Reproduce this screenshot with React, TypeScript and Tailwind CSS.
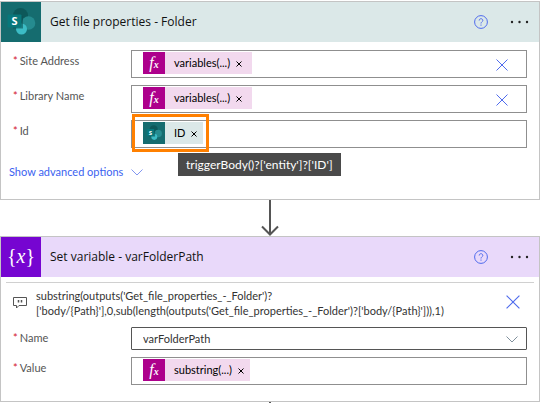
import type { ReactNode } from "react";

function SharePointIcon({ className }: { className: string }) {
  return (
    <svg viewBox="0 0 40 40" className={className} aria-hidden="true">
      <rect width="40" height="40" fill="#156c6f" />
      <circle cx="19.500" cy="13.500" r="7.500" fill="#0d585a" />
      <circle cx="27.500" cy="21" r="6.800" fill="#258b8f" />
      <circle cx="20.500" cy="27" r="5.500" fill="#3cbcc5" />
      <path d="M12 14h10v12.500H12z" fill="#0b5053" opacity="0.6" />
      <rect x="6.500" y="12.500" width="14" height="13" rx="1" fill="#08777b" />
      <text x="13.500" y="23" textAnchor="middle" fontSize="11" fontWeight="700" fill="#fff" fontFamily="Open Sans, sans-serif">
        S
      </text>
    </svg>
  );
}

function FxIcon() {
  return (
    <span className="flex size-[22px] shrink-0 items-center justify-center bg-[#ad008c] font-['Liberation_Serif',serif] text-base leading-none text-white italic">
      f<span className="pt-1 text-[10px] leading-none font-bold">x</span>
    </span>
  );
}

function CrossIcon({ className }: { className: string }) {
  return (
    <svg viewBox="0 0 12 12" className={className} fill="none" stroke="currentColor" aria-hidden="true">
      <path d="M.5.5l11 11M11.500.5l-11 11" />
    </svg>
  );
}

function ChevronIcon({ className }: { className: string }) {
  return (
    <svg viewBox="0 0 12 7" className={className} fill="none" stroke="currentColor" aria-hidden="true">
      <path d="M.5.5L6 6 11.500.5" />
    </svg>
  );
}

function CardHeader({ icon, title, tone }: { icon: ReactNode; title: string; tone: string }) {
  return (
    <header className={`flex h-10 items-center ${tone}`}>
      {icon}
      <h2 className="flex-1 pl-[9px] font-['Open_Sans','Noto_Sans',sans-serif] text-xs leading-5 text-[#111]">{title}</h2>
      <button type="button" aria-label="Help" className="text-[#4f6bed]">
        <svg viewBox="0 0 14 14" className="size-3.5" fill="none" stroke="currentColor" aria-hidden="true">
          <circle cx="7" cy="7" r="6.400" />
          <path d="M5.200 5.500c0-2.400 3.600-2.400 3.600 0C8.800 6.800 7 6.900 7 8.500M7 9.500v1.200" />
        </svg>
      </button>
      <button type="button" aria-label="More commands" className="mr-2.5 ml-[22px] text-[#222]">
        <svg viewBox="0 0 19 4" className="h-1 w-[19px]" fill="currentColor" aria-hidden="true">
          <circle cx="2" cy="2" r="1.200" />
          <circle cx="9.500" cy="2" r="1.200" />
          <circle cx="17" cy="2" r="1.200" />
        </svg>
      </button>
    </header>
  );
}

function Row({ id, label, children }: { id: string; label: string; children: ReactNode }) {
  return (
    <div className="flex">
      <label htmlFor={id} className="w-[130px] shrink-0 pt-0.5 pl-3 text-[11px] leading-[18px] text-[#555]">
        <span className="mr-0.5 text-[#d3122e]">*</span>
        {label}
      </label>
      {children}
    </div>
  );
}

function Token({ icon, text, tone }: { icon: ReactNode; text: string; tone: string }) {
  return (
    <span className={`flex h-[22px] shrink-0 items-center text-[11px] text-black ${tone}`}>
      {icon}
      <span className="pl-[9px]">{text}</span>
      <button type="button" aria-label={`Remove ${text}`} className="px-1.5 pt-0.5">
        <svg viewBox="0 0 6 6" className="size-1.5" fill="none" stroke="currentColor" aria-hidden="true">
          <path d="M.5.5l5 5M5.500.5l-5 5" />
        </svg>
      </button>
    </span>
  );
}

function TokenField({ id, children, clearable }: { id: string; children: ReactNode; clearable?: boolean }) {
  return (
    <div className="flex h-7 min-w-0 flex-1 items-center border border-[#8f8f8f] bg-white pb-0.5 pl-[11px]">
      {children}
      <input id={id} type="text" className="h-5 min-w-0 flex-1 outline-none" />
      {clearable && (
        <button type="button" aria-label="Clear value" className="mr-[18px] pt-1 text-[#4f6bed]">
          <CrossIcon className="size-3" />
        </button>
      )}
    </div>
  );
}

export default function App() {
  return (
    <main className="bg-white pt-px pr-[3px] font-['Lato','Open_Sans',sans-serif]">
      <section className="border border-[#c4c4c4]">
        <CardHeader
          icon={<SharePointIcon className="size-10" />}
          title="Get file properties - Folder"
          tone="bg-[#dbe8e8]"
        />
        <div className="flex flex-col gap-[7px] pt-2 pr-3">
          <Row id="site" label="Site Address">
            <TokenField id="site" clearable>
              <Token icon={<FxIcon />} text="variables(...)" tone="bg-[#f2d9ee] pr-1" />
            </TokenField>
          </Row>
          <Row id="library" label="Library Name">
            <TokenField id="library" clearable>
              <Token icon={<FxIcon />} text="variables(...)" tone="bg-[#f2d9ee] pr-1" />
            </TokenField>
          </Row>
          <Row id="item" label="Id">
            <TokenField id="item">
              <div className="relative">
                <Token icon={<SharePointIcon className="size-[22px]" />} text="ID" tone="bg-[#dbe8e8]" />
                <span className="pointer-events-none absolute -inset-y-2 -right-[6px] -left-[11px] border-3 border-[#ff8000]" />
                <span role="tooltip" className="absolute top-[31px] left-[35px] bg-[#4a4a4a] px-2 text-xs leading-[23px] whitespace-nowrap text-white">
                  triggerBody()?['entity']?['ID']
                </span>
              </div>
            </TokenField>
          </Row>
        </div>
        <button type="button" className="mt-3.5 mb-[17px] ml-2 flex items-center gap-2 text-[11px] leading-5 text-[#3b62f0]">
          Show advanced options
          <ChevronIcon className="h-[7px] w-3 text-[#8296f0]" />
        </button>
      </section>

      <div className="flex h-9 justify-center">
        <svg viewBox="0 0 18 36" className="h-9 w-[18px]" fill="none" stroke="#555" strokeWidth="2" aria-hidden="true">
          <path d="M9 0v35M1 26.500l8 8 8-8" />
        </svg>
      </div>

      <section className="border border-[#c4c4c4]">
        <CardHeader
          icon={
            <span className="flex size-10 items-center justify-center bg-[#7605d1] pb-0.5 font-['Liberation_Serif',serif] text-xl leading-none text-white">
              {"{"}
              <i>x</i>
              {"}"}
            </span>
          }
          title="Set variable - varFolderPath"
          tone="bg-[#e9d9fa]"
        />
        <div className="mx-[5px] mt-[5px] flex items-start border-t border-[#d0d0d0] pt-[5px]">
          <svg viewBox="0 0 14 13" className="mt-2 ml-[7px] h-[13px] w-3.5 shrink-0" fill="none" stroke="#555" aria-hidden="true">
            <path d="M.5 1.500h13v8H6L3.500 12V9.500h-3z" />
            <path d="M5.500 4v2.500M8.500 4v2.500" strokeWidth="1.500" />
          </svg>
          <p className="min-w-0 flex-1 pl-[9px] text-[11px] leading-[15px] text-[#333]">
            substring(outputs('Get_file_properties_-_Folder')?
            <br />
            ['body/&#123;Path&#125;'],0,sub(length(outputs('Get_file_properties_-_Folder')?['body/&#123;Path&#125;'])),1)
          </p>
          <button type="button" aria-label="Delete comment" className="mt-[7px] mr-3.5 text-[#4f6bed]">
            <CrossIcon className="size-3.5" />
          </button>
        </div>
        <div className="flex flex-col gap-[7px] pt-[9px] pr-3 pb-4">
          <Row id="name" label="Name">
            <div className="relative min-w-0 flex-1">
              <select id="name" className="block h-[23px] w-full appearance-none rounded-[1px] border border-[#555] bg-white pt-0.5 pl-[11px] text-[11px] text-[#333]">
                <option>varFolderPath</option>
              </select>
              <ChevronIcon className="pointer-events-none absolute top-[9px] right-[9px] h-[7px] w-3 text-[#80909c]" />
            </div>
          </Row>
          <Row id="value" label="Value">
            <TokenField id="value">
              <Token icon={<FxIcon />} text="substring(...)" tone="bg-[#f2d9ee]" />
            </TokenField>
          </Row>
        </div>
      </section>
      <div className="mx-auto h-px w-0.5 bg-[#555]" />
    </main>
  );
}
